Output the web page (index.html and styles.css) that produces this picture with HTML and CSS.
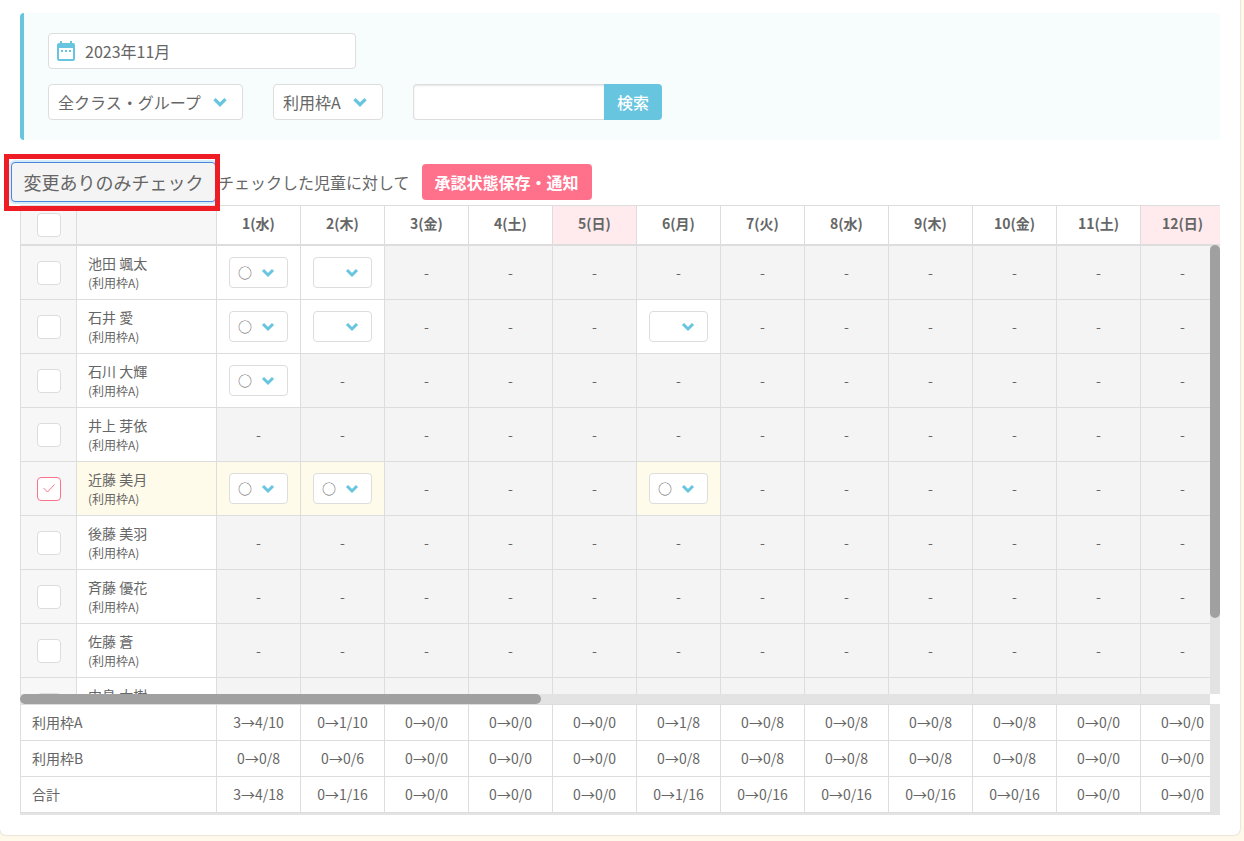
FILE: index.html
```html
<!DOCTYPE html>
<html lang="ja">
<head>
<meta charset="utf-8">
<meta name="viewport" content="width=device-width, initial-scale=1">
<title>利用申請一覧</title>
<link rel="stylesheet" href="styles.css">
</head>
<body>
<main class="card">
  <form class="filter">
    <label class="date-field">
      <svg class="date-icon" viewBox="0 0 18 20" aria-hidden="true">
        <path fill="#67c5df" fill-rule="evenodd" d="M3 0h2v2h8V0h2v2h1a2 2 0 0 1 2 2v14a2 2 0 0 1-2 2H2a2 2 0 0 1-2-2V4a2 2 0 0 1 2-2h1zM2 7v11h14V7z"/>
        <path fill="#67c5df" d="M4 9h2v2H4zM8 9h2v2H8zM12 9h2v2h-2z"/>
      </svg>
      <input class="date-input" type="text" value="2023年11月" aria-label="対象月">
    </label>
    <div class="filter-row">
      <select class="select select-class" aria-label="クラス・グループ"><option>全クラス・グループ</option></select>
      <select class="select select-slot" aria-label="利用枠"><option>利用枠A</option></select>
      <div class="search">
        <input class="search-input" type="text" aria-label="検索語">
        <button class="search-button" type="button">検索</button>
      </div>
    </div>
  </form>

  <div class="actions">
    <div class="marked">
      <button class="check-button" type="button">変更ありのみチェック</button>
      <span class="marker"></span>
    </div>
    <span class="actions-text">チェックした児童に対して</span>
    <button class="save-button" type="button">承認状態保存・通知</button>
  </div>

  <div class="pane">
    <table class="grid grid-head">
      <colgroup><col class="col-check"><col class="col-name"><col span="12" class="col-day"></colgroup>
      <thead>
        <tr>
          <th class="side"><input class="check" type="checkbox" aria-label="すべて選択"></th><th class="side"></th>
          <th>1(水)</th><th>2(木)</th><th>3(金)</th><th>4(土)</th><th class="holiday">5(日)</th><th>6(月)</th><th>7(火)</th><th>8(水)</th><th>9(木)</th><th>10(金)</th><th>11(土)</th><th class="holiday">12(日)</th>
        </tr>
      </thead>
    </table>
  </div>

  <div class="scroller">
    <div class="pane pane-body">
      <table class="grid grid-body">
        <colgroup><col class="col-check"><col class="col-name"><col span="12" class="col-day"></colgroup>
        <tbody>
          <tr>
            <td class="side"><input class="check" type="checkbox" aria-label="池田 颯太"></td>
            <td class="name">池田 颯太<small>(利用枠A)</small></td>
            <td class="open"><select class="mark" aria-label="1日"><option>○</option></select></td>
            <td class="open"><select class="mark" aria-label="2日"><option></option></select></td>
            <td>-</td><td>-</td><td>-</td><td>-</td><td>-</td><td>-</td><td>-</td><td>-</td><td>-</td><td>-</td>
          </tr>
          <tr>
            <td class="side"><input class="check" type="checkbox" aria-label="石井 愛"></td>
            <td class="name">石井 愛<small>(利用枠A)</small></td>
            <td class="open"><select class="mark" aria-label="1日"><option>○</option></select></td>
            <td class="open"><select class="mark" aria-label="2日"><option></option></select></td>
            <td>-</td><td>-</td><td>-</td>
            <td class="open"><select class="mark" aria-label="6日"><option></option></select></td>
            <td>-</td><td>-</td><td>-</td><td>-</td><td>-</td><td>-</td>
          </tr>
          <tr>
            <td class="side"><input class="check" type="checkbox" aria-label="石川 大輝"></td>
            <td class="name">石川 大輝<small>(利用枠A)</small></td>
            <td class="open"><select class="mark" aria-label="1日"><option>○</option></select></td>
            <td>-</td><td>-</td><td>-</td><td>-</td><td>-</td><td>-</td><td>-</td><td>-</td><td>-</td><td>-</td><td>-</td>
          </tr>
          <tr>
            <td class="side"><input class="check" type="checkbox" aria-label="井上 芽依"></td>
            <td class="name">井上 芽依<small>(利用枠A)</small></td>
            <td>-</td><td>-</td><td>-</td><td>-</td><td>-</td><td>-</td><td>-</td><td>-</td><td>-</td><td>-</td><td>-</td><td>-</td>
          </tr>
          <tr class="selected">
            <td class="side"><input class="check" type="checkbox" checked aria-label="近藤 美月"></td>
            <td class="name">近藤 美月<small>(利用枠A)</small></td>
            <td class="open"><select class="mark" aria-label="1日"><option>○</option></select></td>
            <td class="open"><select class="mark" aria-label="2日"><option>○</option></select></td>
            <td>-</td><td>-</td><td>-</td>
            <td class="open"><select class="mark" aria-label="6日"><option>○</option></select></td>
            <td>-</td><td>-</td><td>-</td><td>-</td><td>-</td><td>-</td>
          </tr>
          <tr>
            <td class="side"><input class="check" type="checkbox" aria-label="後藤 美羽"></td>
            <td class="name">後藤 美羽<small>(利用枠A)</small></td>
            <td>-</td><td>-</td><td>-</td><td>-</td><td>-</td><td>-</td><td>-</td><td>-</td><td>-</td><td>-</td><td>-</td><td>-</td>
          </tr>
          <tr>
            <td class="side"><input class="check" type="checkbox" aria-label="斉藤 優花"></td>
            <td class="name">斉藤 優花<small>(利用枠A)</small></td>
            <td>-</td><td>-</td><td>-</td><td>-</td><td>-</td><td>-</td><td>-</td><td>-</td><td>-</td><td>-</td><td>-</td><td>-</td>
          </tr>
          <tr>
            <td class="side"><input class="check" type="checkbox" aria-label="佐藤 蒼"></td>
            <td class="name">佐藤 蒼<small>(利用枠A)</small></td>
            <td>-</td><td>-</td><td>-</td><td>-</td><td>-</td><td>-</td><td>-</td><td>-</td><td>-</td><td>-</td><td>-</td><td>-</td>
          </tr>
          <tr>
            <td class="side"><input class="check" type="checkbox" aria-label="中島 大樹"></td>
            <td class="name">中島 大樹</td>
            <td></td><td></td><td></td><td></td><td></td><td></td><td></td><td></td><td></td><td></td><td></td><td></td>
          </tr>
        </tbody>
      </table>
    </div>
    <div class="track track-y"><div class="thumb thumb-y"></div></div>
    <div class="track track-x"><div class="thumb thumb-x"></div></div>
  </div>

  <div class="totals">
    <div class="pane">
      <table class="grid grid-foot">
        <colgroup><col class="col-check"><col class="col-name"><col span="12" class="col-day"></colgroup>
        <tbody>
          <tr><th colspan="2">利用枠A</th><td>3→4/10</td><td>0→1/10</td><td>0→0/0</td><td>0→0/0</td><td>0→0/0</td><td>0→1/8</td><td>0→0/8</td><td>0→0/8</td><td>0→0/8</td><td>0→0/8</td><td>0→0/0</td><td>0→0/0</td></tr>
          <tr><th colspan="2">利用枠B</th><td>0→0/8</td><td>0→0/6</td><td>0→0/0</td><td>0→0/0</td><td>0→0/0</td><td>0→0/8</td><td>0→0/8</td><td>0→0/8</td><td>0→0/8</td><td>0→0/8</td><td>0→0/0</td><td>0→0/0</td></tr>
          <tr><th colspan="2">合計</th><td>3→4/18</td><td>0→1/16</td><td>0→0/0</td><td>0→0/0</td><td>0→0/0</td><td>0→1/16</td><td>0→0/16</td><td>0→0/16</td><td>0→0/16</td><td>0→0/16</td><td>0→0/0</td><td>0→0/0</td></tr>
        </tbody>
      </table>
    </div>
  </div>
</main>
</body>
</html>
```
FILE: styles.css
```css
*, *::before, *::after { box-sizing: border-box; }

body {
  margin: 0;
  background: #fff9ec;
  color: #666;
  font: 16px/24px "Noto Sans CJK JP", sans-serif;
}

button, input, select { font: inherit; color: inherit; margin: 0; }

.card {
  margin: 0 4px 6px 0;
  padding: 13px 20px 20px;
  background: #fff;
  border-radius: 0 0 6px 6px;
  box-shadow: 0 0 2px rgba(0, 0, 0, 0.25);
}

/* Filter panel */
.filter {
  display: flex;
  flex-direction: column;
  align-items: flex-start;
  gap: 15px;
  padding: 20px 24px;
  background: #f7fdfd;
  border-left: 4px solid #67c5df;
  border-radius: 4px;
}

.date-field {
  display: flex;
  align-items: center;
  gap: 10px;
  width: 308px;
  height: 36px;
  padding: 0 8px;
  background: #fff;
  border: 1px solid #ddd;
  border-radius: 4px;
}

.date-icon { width: 18px; height: 20px; flex: none; }

.date-input {
  flex: 1;
  min-width: 0;
  padding: 0;
  border: 0;
  background: none;
  outline: 0;
}

.filter-row { display: flex; gap: 30px; }

.select, .mark {
  appearance: none;
  background: #fff url("data:image/svg+xml,%3Csvg xmlns='http://www.w3.org/2000/svg' viewBox='0 0 14 10'%3E%3Cpath d='M2 2l5 5 5-5' fill='none' stroke='%2367c5df' stroke-width='3'/%3E%3C/svg%3E") no-repeat right 14px center / 16px 11px;
  border: 1px solid #ddd;
  border-radius: 4px;
}

.select { height: 36px; padding: 0 9px; }
.select-class { width: 195px; }
.select-slot { width: 110px; }

.search { display: flex; }

.search-input {
  width: 191px;
  height: 36px;
  padding: 0 10px;
  background: #fff;
  border: 1px solid #ddd;
  border-right: 0;
  border-radius: 4px 0 0 4px;
  box-shadow: inset 0 1px 2px rgba(0, 0, 0, 0.1);
}

.search-button {
  width: 58px;
  padding: 0;
  background: #67c5df;
  border: 0;
  border-radius: 0 4px 4px 0;
  color: #fff;
  font-weight: 500;
}

/* Action bar */
.actions {
  display: flex;
  align-items: center;
  margin: 22px 0 3px -9px;
}

.marked { position: relative; margin-right: 2px; }

.check-button {
  width: 205px;
  height: 40px;
  padding: 0;
  background: #f4f4f4;
  border: 1px solid #4a86dc;
  border-radius: 4px;
  box-shadow: 0 0 0 2px #d5ebf8;
  font-size: 18px;
}

.marker {
  position: absolute;
  inset: -8px -4px -9px -7px;
  border: 5px solid #ee1c25;
  pointer-events: none;
}

.actions-text { margin-right: 12px; }

.save-button {
  width: 170px;
  height: 36px;
  padding: 0;
  background: #ff708b;
  border: 0;
  border-radius: 4px;
  color: #fff;
  font-weight: 700;
}

/* Tables */
.pane { overflow: hidden; min-width: 0; }

.grid {
  width: 1204px;
  table-layout: fixed;
  border-spacing: 0;
  font-size: 14px;
  line-height: 20px;
}

.col-check { width: 56px; }
.col-name { width: 140px; }
.col-day { width: 84px; }

.grid th, .grid td {
  padding: 0 0 2px;
  border: 0 solid #ddd;
  border-width: 1px 0 0 1px;
  text-align: center;
}

.grid-head th { height: 40px; padding-bottom: 4px; border-bottom-width: 1px; font-weight: 700; }
.grid-head .holiday { background: #ffeaed; }
.grid .side { padding: 0; background: #f7f7f7; }

.grid-body td { height: 54px; background: #f4f4f4; }
.grid-body .open { padding: 0; background: #fff; }
.grid-body .name {
  padding: 7px 0 0 11px;
  background: #fff;
  text-align: left;
  vertical-align: top;
}
.name small { display: block; font-size: 12px; }
.grid-body .selected .name, .grid-body .selected .open { background: #fffbea; }

.check {
  appearance: none;
  display: block;
  width: 24px;
  height: 24px;
  margin: 0 auto;
  background: #fff;
  border: 1px solid #ddd;
  border-radius: 4px;
}

.check:checked {
  border-color: #ff708b;
  background: #fff url("data:image/svg+xml,%3Csvg xmlns='http://www.w3.org/2000/svg' viewBox='0 0 12 9'%3E%3Cpath d='M.5 4l4 4 7-7.500' fill='none' stroke='%23ff708b'/%3E%3C/svg%3E") no-repeat center / 12px 9px;
}

.mark {
  display: block;
  width: 59px;
  height: 31px;
  margin: 0 auto;
  padding: 0 8px 2px;
  background-position: right 12px center;
  background-size: 14px 10px;
}

/* Scroll area */
.scroller {
  display: grid;
  grid-template-columns: minmax(0, 1fr) 10px;
}

.pane-body { height: 449px; }
.track { background: #e3e3e3; }
.thumb { background: #a0a0a0; border-radius: 5px; }
.thumb-y { height: 373px; }
.thumb-x { width: 521px; height: 10px; }

/* Totals */
.totals {
  padding: 0 10px 2px 0;
  background: #e3e3e3;
}

.grid-foot { background: #fff; }
.grid-foot th, .grid-foot td { height: 36px; }
.grid-foot tr:last-child > * { height: 37px; border-bottom-width: 1px; }
.grid-foot th { padding-left: 11px; text-align: left; font-weight: 400; }
```
